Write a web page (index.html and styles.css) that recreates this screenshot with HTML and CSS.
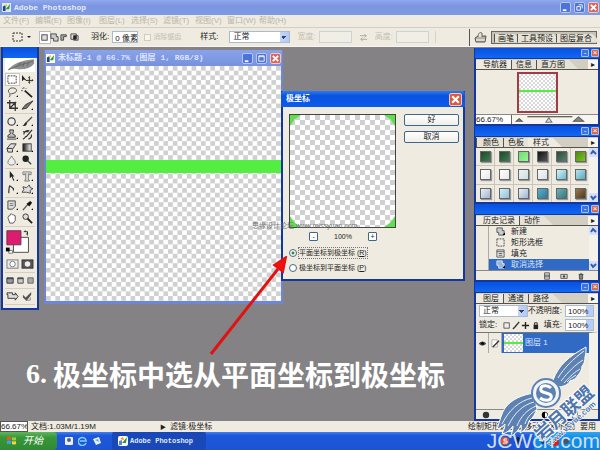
FILE: index.html
```html
<!DOCTYPE html>
<html lang="zh-CN">
<head>
    <meta charset="UTF-8">
    <meta name="viewport" content="width=device-width, initial-scale=1.0">
    <title>Adobe Photoshop</title>
    <link rel="stylesheet" href="styles.css">
</head>
<body>
  <header class="titlebar">
    <svg class="app_icon" viewBox="0 0 10 10"><rect width="10" height="10" fill="#dfe9f5"/><path d="M1 9V4l3-2v7z" fill="#23448a"/><path d="M4 7 9 1l-1 6z" fill="#2c9a3c"/><path d="M2 3l3-2 1 3z" fill="#f0c92c"/></svg>
    <h1>Adobe Photoshop</h1>
    <div class="win_btns">
      <button aria-label="最小化"><svg viewBox="0 0 10 10"><path d="M2 8h4" stroke="#fff" stroke-width="2"/></svg></button>
      <button aria-label="还原"><svg viewBox="0 0 10 10"><path d="M4 2h4v4M2 4h4v4H2z" stroke="#fff" fill="none"/></svg></button>
      <button class="close" aria-label="关闭"><svg viewBox="0 0 10 10"><path d="M2 2l6 6M8 2l-6 6" stroke="#fff" stroke-width="2"/></svg></button>
    </div>
  </header>

  <nav class="menu">
    <button>文件(F)</button><button>编辑(E)</button><button>图像(I)</button><button>图层(L)</button><button>选择(S)</button><button>滤镜(T)</button><button>视图(V)</button><button>窗口(W)</button><button>帮助(H)</button>
  </nav>

  <div class="options">
    <button class="cur_tool" aria-label="矩形选框">
      <svg width="20" height="12" viewBox="0 0 20 12"><rect x="1" y="2" width="9" height="8" fill="none" stroke="#333" stroke-dasharray="2 1"/><path d="M15 5h4l-2 2z" fill="#222"/></svg>
    </button>
    <div class="modes">
      <button class="on" aria-label="新选区"><svg viewBox="0 0 10 10"><rect x="2" y="2" width="6" height="6" fill="#ddd" stroke="#444"/></svg></button>
      <button aria-label="添加"><svg viewBox="0 0 10 10"><path d="M1 1h6v3h2v5H4V6H1z" fill="#ccc" stroke="#444"/></svg></button>
      <button aria-label="减去"><svg viewBox="0 0 10 10"><path d="M1 8V2h6v2H4v4z" fill="#aaa" stroke="#444"/></svg></button>
      <button aria-label="交叉"><svg viewBox="0 0 10 10"><path d="M1 1h6v6H1zM4 3h5v5H4z" fill="#ddd" stroke="#444"/><path d="M4 3h3v4H4z" fill="#222"/></svg></button>
    </div>
    <label class="feather">羽化: <input type="text" value="0 像素"></label>
    <label class="anti off"><input type="checkbox" disabled>消除锯齿</label>
    <label class="style_sel">样式: <select><option>正常</option></select></label>
    <label class="dim off">宽度: <input type="text" disabled></label>
    <svg class="swap" viewBox="0 0 10 10"><path d="M1 3h7M6 1l2 2-2 2M9 7H2M4 5L2 7l2 2" fill="none" stroke="#aaa49a"/></svg>
    <label class="dim off">高度: <input type="text" disabled></label>
    <div class="dock">
      <button aria-label="画笔面板"><svg width="13" height="13" viewBox="0 0 13 13"><path d="M1 7l3-2h8l-1 6H2z" fill="#b5b1a8" stroke="#55524c"/><path d="M4 6c0-4 2-5 4-4v4" fill="#e9e5da" stroke="#666"/><path d="M2 9h9" stroke="#fff"/></svg></button>
      <div class="well tabs"><button>画笔</button><button>工具预设</button><button>图层复合</button></div>
    </div>
  </div>

  <main class="workspace">
    <aside class="toolbox">
      <div class="tb_head"></div>
      <svg class="quill" viewBox="0 0 34 13"><path d="M3 12C11 4 20 1 33 0v5c-4 5-11 7-20 6-3 0-6-1-8 1z" fill="#8f8f8f"/><path d="M4 12C12 8 20 6 32 2M16 8l3-5M20 9l2-6M12 9l5-5M25 8l2-5" stroke="#555" stroke-width=".7" fill="none"/></svg>
      <div class="tools">
        <button class="on" aria-label="选框"><svg viewBox="0 0 14 12"><path d="M2 2h9v8H2z" fill="none" stroke="#333" stroke-dasharray="2 1"/></svg></button>
        <button aria-label="移动"><svg viewBox="0 0 14 12"><path d="M1 1v7l2-2 3 1z" fill="#222"/><path d="M9 3v7M5 7h8M8 4l1-1 1 1M8 9l1 1 1-1M12 6l1 1-1 1" stroke="#222" fill="none"/></svg></button>
        <button aria-label="套索"><svg viewBox="0 0 14 12"><path d="M4 7C1 5 3 1 7 1s6 3 3 5-6 1-6 2 1 2-1 3" fill="none" stroke="#444"/><path d="M11 11h2V9z"/></svg></button>
        <button aria-label="魔棒"><svg viewBox="0 0 14 12"><path d="M4 4l8 7" stroke="#222" stroke-width="2"/><path d="M3 0v2M0 4h2M1 1l1 1M6 1L5 2" stroke="#555"/></svg></button>
        <button aria-label="裁剪"><svg viewBox="0 0 14 12"><path d="M4 0v9h9M1 3h9v9M4 9l7-7" fill="none" stroke="#333" stroke-width="1.4"/></svg></button>
        <button aria-label="切片"><svg viewBox="0 0 14 12"><path d="M1 10l5-1 7-8-8 4z" fill="#777" stroke="#333"/><path d="M11 11h2V9z"/></svg></button>
      </div>
      <div class="tools">
        <button aria-label="修复画笔"><svg viewBox="0 0 14 12"><circle cx="6" cy="6" r="4" fill="#eee" stroke="#444" stroke-width="1.3"/><path d="M11 11h2V9z"/></svg></button>
        <button aria-label="画笔"><svg viewBox="0 0 14 12"><path d="M12 1L5 8" stroke="#555" stroke-width="1.5"/><path d="M6 7c-3 0-2 3-5 4 4 0 6-1 5-4z" fill="#222"/><path d="M11 11h2V9z"/></svg></button>
        <button aria-label="图章"><svg viewBox="0 0 14 12"><path d="M4 1h4v2L7 5l3 2v2H2V7l3-2-1-2zM1 11h10" fill="#bbb" stroke="#333"/><path d="M11 11h2V9z"/></svg></button>
        <button aria-label="历史画笔"><svg viewBox="0 0 14 12"><path d="M12 1L6 8c-2 0-1 2-4 3M2 3h6M3 6c0-3 3-5 6-4M8 11c3-1 4-3 3-5" fill="none" stroke="#333" stroke-width="1.3"/></svg></button>
        <button aria-label="橡皮"><svg viewBox="0 0 14 12"><path d="M1 7l4-5h6L7 8v3H2zM1 7h6" fill="#ddd" stroke="#333"/><path d="M11 11h2V9z"/></svg></button>
        <button aria-label="渐变"><svg viewBox="0 0 14 12"><defs><linearGradient id="gr"><stop stop-color="#111"/><stop offset="1" stop-color="#fff"/></linearGradient></defs><rect x="2" y="2" width="9" height="8" fill="url(#gr)" stroke="#333"/><path d="M11 11h2V9z"/></svg></button>
        <button aria-label="模糊"><svg viewBox="0 0 14 12"><path d="M6 1c1 3 4 4 4 7 0 4-8 4-8 0 0-3 3-4 4-7z" fill="#eee" stroke="#777"/><path d="M11 11h2V9z"/></svg></button>
        <button aria-label="减淡"><svg viewBox="0 0 14 12"><circle cx="5" cy="4" r="3.500" fill="#222"/><path d="M7 6l4 4" stroke="#444" stroke-width="1.5"/></svg></button>
      </div>
      <div class="tools">
        <button aria-label="路径选择"><svg viewBox="0 0 14 12"><path d="M4 0v8l2-2 2 5 1-1-2-4h2z" fill="#222"/><path d="M11 11h2V9z"/></svg></button>
        <button aria-label="文字"><svg viewBox="0 0 14 12"><path d="M2 1h9v3H9V3H8v7h1v1H4v-1h1V3H4v1H2z" fill="#ddd" stroke="#666" stroke-width=".8"/><path d="M11 11h2V9z"/></svg></button>
        <button aria-label="钢笔"><svg viewBox="0 0 14 12"><path d="M3 10C3 6 3 4 4 2l4 3v2" fill="none" stroke="#333" stroke-width="1.3"/><path d="M11 11h2V9z"/></svg></button>
        <button aria-label="形状"><svg viewBox="0 0 14 12"><path d="M1 9l2-3-1-3 4 1 3-3 1 3 3 1-3 2v3l-4-1z" fill="#ddd" stroke="#444"/><path d="M11 11h2V9z"/></svg></button>
      </div>
      <div class="tools">
        <button aria-label="注释"><svg viewBox="0 0 14 12"><path d="M2 1h8v6l-3 3H2z" fill="#ddd" stroke="#444"/><path d="M4 4h4M4 6h4" stroke="#777"/><path d="M11 11h2V9z"/></svg></button>
        <button aria-label="吸管"><svg viewBox="0 0 14 12"><path d="M2 11l6-7" stroke="#555" stroke-width="1.5"/><path d="M6 4l3 3 3-4-2-2z" fill="#111"/><path d="M11 11h2V9z"/></svg></button>
        <button aria-label="抓手"><svg viewBox="0 0 14 12"><path d="M2 5l1-2h1l1-2h1l1 1h1l2 1v5l-2 3H4z" fill="#fff" stroke="#555"/></svg></button>
        <button aria-label="缩放"><svg viewBox="0 0 14 12"><circle cx="5" cy="4" r="3" fill="#ddd" stroke="#333"/><path d="M7 6l5 5" stroke="#222" stroke-width="2"/></svg></button>
      </div>
      <svg class="colors" viewBox="0 0 32 28"><path d="M9 9h16v16H9z" fill="#fff" stroke="#444"/><path d="M2 2h15v15H2z" fill="#dc1c70" stroke="#6a3048"/><path d="M21 3h3v3M20 3l2-1M24 7l-1-2" stroke="#222" fill="none"/><path d="M4 23h4v3H4z" fill="#fff" stroke="#777"/><path d="M1 20h4v4H1z"/></svg>
      <div class="tools wide">
        <button aria-label="标准模式"><svg viewBox="0 0 14 12"><rect x="1" y="1" width="12" height="9" fill="#eee" stroke="#777"/><circle cx="7" cy="5.500" r="3" fill="#fff" stroke="#777"/></svg></button>
        <button aria-label="快速蒙版"><svg viewBox="0 0 14 12"><rect x="1" y="1" width="12" height="9" fill="#555" stroke="#333"/><circle cx="7" cy="5.500" r="3" fill="#eee"/></svg></button>
      </div>
      <div class="tools three">
        <button aria-label="标准屏幕"><svg viewBox="0 0 10 10"><path d="M1 2h7v6H1z" fill="#99a" stroke="#333"/><path d="M1 3h7" stroke="#333"/></svg></button>
        <button aria-label="带菜单全屏"><svg viewBox="0 0 10 10"><path d="M2 2h6v6H2z" fill="#ccc" stroke="#444"/><path d="M2 3h6" stroke="#333"/></svg></button>
        <button aria-label="全屏"><svg viewBox="0 0 10 10"><path d="M2 2h6v6H2z" fill="#aaa" stroke="#666"/></svg></button>
      </div>
      <div class="tools wide">
        <button aria-label="跳转"><svg viewBox="0 0 14 12"><path d="M1 2h6v2h3V2l3 4-3 4V8H2V4H1z" fill="#ddd" stroke="#333"/></svg></button>
        <button aria-label="ImageReady"><svg viewBox="0 0 14 12"><path d="M2 4l3 3 6-6v3l-5 7-4-4z" fill="#555"/><path d="M10 7v3H6" stroke="#888" fill="none"/></svg></button>
      </div>
    </aside>

    <section class="doc">
      <div class="doc_title">
        <svg class="app_icon" viewBox="0 0 10 10"><rect width="10" height="10" fill="#fff"/><path d="M1 9V4l3-2v7z" fill="#23448a"/><path d="M4 7 9 1l-1 6z" fill="#2c9a3c"/><path d="M2 3l3-2 1 3z" fill="#f0c92c"/></svg>
        <h2>未标题-1 @ 66.7% (图层 1, RGB/8)</h2>
        <div class="win_btns">
          <button aria-label="最小化"><svg viewBox="0 0 10 10"><path d="M2 8h4" stroke="#fff" stroke-width="2"/></svg></button>
          <button aria-label="最大化"><svg viewBox="0 0 10 10"><path d="M2 2h6v6H2zM2 3h6" stroke="#fff" fill="none"/></svg></button>
          <button class="close" aria-label="关闭"><svg viewBox="0 0 10 10"><path d="M2 2l6 6M8 2l-6 6" stroke="#fff" stroke-width="2"/></svg></button>
        </div>
      </div>
      <div class="canvas checks"><div class="band"></div></div>
    </section>

    <section class="dialog" role="dialog" aria-label="极坐标">
      <div class="dlg_title">
        <h2>极坐标</h2>
        <button class="close" aria-label="关闭"><svg viewBox="0 0 10 10"><path d="M2 2l6 6M8 2l-6 6" stroke="#fff" stroke-width="2"/></svg></button>
      </div>
      <div class="dlg_body">
        <div class="preview checks">
          <i class="corner"></i><i class="corner"></i><i class="corner"></i><i class="corner"></i>
        </div>
        <div class="dlg_btns"><button>好</button><button>取消</button></div>
        <div class="zoom_row"><button aria-label="缩小">-</button><span>100%</span><button aria-label="放大">+</button></div>
        <div class="radios">
          <label><input type="radio" name="polar" checked><span class="focus">平面坐标到极坐标 (<u>R</u>)</span></label>
          <label><input type="radio" name="polar"><span>极坐标到平面坐标 (<u>P</u>)</span></label>
        </div>
      </div>
    </section>

    <aside class="palettes">
      <section class="palette">
        <div class="p_title"><button aria-label="最小化">-</button><button class="close" aria-label="关闭">×</button></div>
        <div class="tabs"><button class="on">导航器</button><button>信息</button><button>直方图</button><span class="more">▸</span></div>
        <div class="nav_body"><div class="thumb checks_s"><div class="band"></div></div></div>
        <div class="nav_foot">
          <input type="text" value="66.67%" aria-label="缩放比例">
          <svg viewBox="0 0 84 10" preserveAspectRatio="none"><path d="M4 7l3-3 3 3zM60 7l5-5 5 5z" fill="#888" stroke="#555"/><path d="M15 2h44" stroke="#333"/><path d="M33 8l3-5 3 5z" fill="#ddd" stroke="#777"/></svg>
        </div>
      </section>

      <section class="palette">
        <div class="p_title"><button aria-label="最小化">-</button><button class="close" aria-label="关闭">×</button></div>
        <div class="tabs"><button>颜色</button><button>色板</button><button class="on">样式</button><span class="more">▸</span></div>
        <div class="scroll_row">
          <div class="swatches">
            <button class="s1" aria-label="样式 1"></button><button class="s1" aria-label="样式 2"></button><button class="s2" aria-label="样式 3"></button><button class="s3" aria-label="样式 4"></button><button class="s4" aria-label="样式 5"></button><button class="s5" aria-label="样式 6"></button>
            <button class="s6" aria-label="样式 7"></button><button class="s6" aria-label="样式 8"></button><button class="s7" aria-label="样式 9"></button><button class="s8" aria-label="样式 10"></button><button class="s9" aria-label="样式 11"></button><button class="s10" aria-label="样式 12"></button>
            <button class="s11" aria-label="样式 13"></button><button class="s12" aria-label="样式 14"></button><button class="s11" aria-label="样式 15"></button><button class="s13" aria-label="样式 16"></button><button class="s14" aria-label="样式 17"></button><button class="s15" aria-label="样式 18"></button>
          </div>
          <div class="sbar"><svg viewBox="0 0 9 9"><path d="M2 6l2-3 3 3" fill="none" stroke="#3b5da8" stroke-width="2"/></svg><svg viewBox="0 0 9 9"><path d="M2 3l2 3 3-3" fill="none" stroke="#3b5da8" stroke-width="2"/></svg></div>
        </div>
      </section>

      <section class="palette">
        <div class="p_title"><button aria-label="最小化">-</button><button class="close" aria-label="关闭">×</button></div>
        <div class="tabs"><button class="on">历史记录</button><button>动作</button><span class="more">▸</span></div>
        <div class="scroll_row">
          <ul class="history">
            <li><svg viewBox="0 0 10 10"><path d="M1 1h6v3h2v5H3V6H1z" fill="#ccc" stroke="#555"/><path d="M7 9h3V6z"/></svg>新建</li>
            <li><svg viewBox="0 0 10 10"><path d="M1 1h8v8H1z" fill="none" stroke="#444" stroke-dasharray="2 1"/></svg>矩形选框</li>
            <li><svg viewBox="0 0 10 10"><path d="M1 1h8v8H1zM1 3h8M3 5h4M3 7h4" fill="#eee" stroke="#555"/></svg>填充</li>
            <li class="on"><svg viewBox="0 0 10 10"><path d="M1 1h6v3h2v5H3V6H1z" fill="#9ab4de" stroke="#dfe8f6"/><path d="M7 9h3V6z"/></svg>取消选择</li>
          </ul>
          <div class="sbar"><svg viewBox="0 0 9 9"><path d="M2 6l2-3 3 3" fill="none" stroke="#3b5da8" stroke-width="2"/></svg><svg viewBox="0 0 9 9"><path d="M2 3l2 3 3-3" fill="none" stroke="#3b5da8" stroke-width="2"/></svg></div>
        </div>
        <div class="p_foot">
          <svg viewBox="0 0 10 10"><path d="M2 1h6v8H2zM2 4h6M2 6h6" fill="#ddd" stroke="#444"/></svg>
          <svg viewBox="0 0 10 10"><path d="M1 3h8v5H1z" fill="#ddd" stroke="#444"/><circle cx="5" cy="5.500" r="1.500" fill="#444"/></svg>
          <svg viewBox="0 0 10 10"><path d="M2 3h6M3 3v6h4V3M5 1v8" fill="#bbb" stroke="#333"/></svg>
        </div>
      </section>

      <section class="palette layers">
        <div class="p_title"><button aria-label="最小化">-</button><button class="close" aria-label="关闭">×</button></div>
        <div class="tabs"><button class="on">图层</button><button>通道</button><button>路径</button><span class="more">▸</span></div>
        <div class="l_row">
          <select aria-label="混合模式"><option>正常</option></select>
          <label>不透明度: <input type="text" value="100%"></label>
        </div>
        <div class="l_row">
          <span>锁定:</span>
          <svg class="locks" viewBox="0 0 40 10"><path d="M1 2h6v6H1z" fill="#eee" stroke="#555"/><path d="M18 1l-5 6-2 2" stroke="#333" stroke-width="1.5"/><path d="M25 1v8M21 5h8" stroke="#222" stroke-width="1.500"/><path d="M34 4h5v5h-5z" fill="#222"/><path d="M35 4V2h3v2" fill="none" stroke="#222"/></svg>
          <label>填充: <input type="text" value="100%"></label>
        </div>
        <div class="layer">
          <span class="cell"><svg viewBox="0 0 10 10"><path d="M1 5c2-3 6-3 8 0-2 3-6 3-8 0z" fill="#444"/><circle cx="5" cy="5" r="1.500"/></svg></span>
          <span class="cell"><svg viewBox="0 0 10 10"><path d="M1 1h6v8H1z" fill="#fff" stroke="#aaa"/><path d="M9 2L4 7 2 9" stroke="#333" stroke-width="1.500"/></svg></span>
          <span class="l_thumb checks_s"><i class="band"></i></span>
          <span class="l_name">图层 1</span>
        </div>
        <div class="l_space"></div>
        <div class="p_foot l_foot">
          <svg viewBox="0 0 10 10"><circle cx="5" cy="5" r="4" fill="#333"/></svg>
          <svg viewBox="0 0 10 10"><path d="M1 2h8v6H1z" fill="#ddd" stroke="#555"/></svg>
          <svg viewBox="0 0 10 10"><circle cx="5" cy="5" r="3.500" fill="#fff" stroke="#222"/><path d="M5 1a4 4 0 0 0 0 8z"/></svg>
          <svg viewBox="0 0 10 10"><path d="M2 1h6v8H2z" fill="#eee" stroke="#555"/></svg>
        </div>
      </section>
    </aside>

    <p class="site_mark">思缘设计论坛 www.missyuan.com</p>
    <svg class="arrow" viewBox="0 0 80 100"><path d="M2 98L69 13" stroke="#e01212" stroke-width="3"/><path d="M77 1L65 9l9 7z" fill="#f01010" stroke="#e01212" stroke-width="2"/></svg>
    <p class="caption"><b>6.</b>极坐标中选从平面坐标到极坐标</p>
  </main>

  <div class="status">
    <input type="text" value="66.67%" aria-label="显示比例">
    <span class="size">文档:1.03M/1.19M</span>
    <span class="tri">▶</span>
    <span>滤镜:极坐标</span>
    <span class="hint">绘制矩形选区或移动选区外框。要用</span>
  </div>

  <footer class="taskbar">
    <button class="start"><svg viewBox="0 0 12 12"><path d="M1 2q2-1 4 0v3q-2-1-4 0z" fill="#f0552a"/><path d="M6 2q2 1 4 0v3q-2 1-4 0z" fill="#8fd33c"/><path d="M1 6q2-1 4 0v3q-2-1-4 0z" fill="#4aa0f0"/><path d="M6 6q2 1 4 0v3q-2 1-4 0z" fill="#fbd23c"/></svg>开始</button>
    <div class="quick">
      <svg viewBox="0 0 10 10"><rect x="1" y="1" width="8" height="8" rx="1" fill="#eef"/><circle cx="5" cy="4" r="2" fill="#4a5f9a"/></svg>
      <svg viewBox="0 0 10 10"><path d="M8 7a4 4 0 1 1 0-3M2 5h7" fill="none" stroke="#7fd0ff" stroke-width="1.500"/></svg>
      <svg viewBox="0 0 10 10"><path d="M1 3l6-2 2 6-5 2z" fill="#e6f3ff"/><path d="M3 4l3-1 1 3z" fill="#5aa6d8"/></svg>
    </div>
    <button class="task"><svg viewBox="0 0 10 10"><rect width="10" height="10" rx="2" fill="#fff"/><path d="M4 7 9 1l-1 6z" fill="#2c9a3c"/><path d="M2 3l3-2 1 3z" fill="#f08a2c"/><path d="M1 9V5l3-1v5z" fill="#5a84c8"/></svg>Adobe Photoshop</button>
    <div class="lang">
      <svg viewBox="0 0 10 10"><circle cx="5" cy="5" r="4" fill="#e2572b"/><path d="M7 3H4v2h3v2H3" stroke="#fff" fill="none"/></svg>
      <svg viewBox="0 0 10 10"><path d="M5 1c2 0 2 2 2 3l2 3H7l-1 2H4L3 7H1l2-3c0-1 0-3 2-3z" fill="#16244c"/></svg>
    </div>
    <div class="tray">
      <svg viewBox="0 0 10 10"><circle cx="5" cy="5" r="3" fill="#234"/></svg>
      <svg viewBox="0 0 10 10"><circle cx="5" cy="6" r="4" fill="#d8201c"/></svg>
      <svg viewBox="0 0 10 10"><circle cx="5" cy="5" r="3" fill="#456"/></svg>
    </div>
  </footer>

  <div class="site_logo">
    <svg viewBox="0 0 112 116">
      <g fill="#5d82b2" stroke="#fff" stroke-width="1">
        <path d="M65 46C71 31 80 23 98 13c0 5 0 7-1 10 0 4-1 7-3 9 0 4-2 7-4 9-2 4-5 5-8 6-2 4-6 5-10 6z"/>
        <path d="M46 59C34 61 24 65 17 74 13 80 12 87 9 95c3-1 5-2 8-5 0 4-2 7-3 10 5-1 8-4 11-8 0 4-1 7-3 11 5-3 9-7 11-12 1 3 0 6-1 8 5-3 8-7 9-12 4-3 6-7 8-12z"/>
      </g>
      <path d="M70 44C76 34 85 25 96 17M73 47c7-9 14-16 22-21M76 49c6-7 11-11 16-14M79 48c4-4 6-5 9-7M44 64C31 67 21 76 14 90M46 68C35 71 27 78 20 92M48 72c-9 4-15 10-19 20M48 76c-6 4-9 8-11 14" fill="none" stroke="#e7edf5"/>
      <circle cx="58" cy="59" r="14" fill="#f2f5fa" stroke="#5d82b2" stroke-width="2"/>
      <circle cx="58" cy="59" r="10" fill="#5d82b2"/>
      <path d="M63 54c-3-3-9-3-10 0s1 4 5 5 6 2 5 5-7 3-11 0" fill="none" stroke="#fff" stroke-width="3"/>
    </svg>
    <span class="l_big">岩月联盟</span>
    <span class="l_small">www.vsyue.com</span>
    <span class="jcw">JCWcn.com</span>
  </div>
</body>
</html>
```
FILE: styles.css
```css
*{margin:0;padding:0;box-sizing:border-box;}
:root{--face:#efebe0;--line:#aca899;--blue:#0b58e6;--navy:#1238a0;}
body{
  position:relative;display:flex;flex-direction:column;width:100%;height:100vh;overflow:hidden;
  font-family:"Liberation Sans","Noto Sans CJK SC",sans-serif;font-size:8px;line-height:10px;color:#222;background:#848284;
}
button,input,select{font:inherit;color:inherit;border:0;background:none;border-radius:0;min-width:0;}
h1,h2{font-size:8px;line-height:10px;}
svg{display:block;}
ul{list-style:none;}
label{white-space:nowrap;}

/* 标题栏 */
.titlebar{display:flex;align-items:center;gap:3px;height:15px;padding:0 1px 0 2px;background:linear-gradient(#8fa8ee,#7b96e0 40%,#7d9be6);flex:none;}
.titlebar h1{font-family:"Liberation Mono",monospace;color:#e3eafb;}
.app_icon{width:9px;height:9px;flex:none;}
.win_btns{display:flex;gap:3px;margin-left:auto;}
.win_btns button,.close{width:11px;height:11px;border:1px solid #b6c6f4;border-radius:2px;background:#4c72dc;}
.win_btns .close,.close{background:#cf6a62;border-color:#f0c8c8;}
.win_btns svg,.close svg{width:100%;height:100%;}

.menu{display:flex;height:12px;padding-left:3px;background:var(--face);color:#bab6a8;flex:none;}
.menu button{width:32px;text-align:left;white-space:nowrap;}

/* 选项栏 */
.options{display:flex;align-items:center;height:20px;padding-left:12px;background:var(--face);border-top:1px solid #d4cfc2;border-bottom:1px solid #f8f6ee;flex:none;}
.modes{display:flex;width:40px;margin-left:8px;}
.modes button{width:10px;height:11px;}
.modes .on{background:#fff;outline:1px solid #bbb;}
.modes svg{width:9px;height:9px;}
.options label{display:flex;align-items:center;}
.options input[type=text]{height:12px;border:1px solid #a8bccf;background:#fff;}
.feather{gap:3px;padding-left:11px;}
.feather input{width:26px;padding-left:2px;}
.options .anti{gap:2px;margin-left:6px;width:56px;font-size:7px;}
.anti input{appearance:none;width:7px;height:7px;border:1px solid #d0ccc0;background:#f7f5ee;}
.off{color:#c4c0b4;}
.style_sel{gap:11px;}
select{appearance:none;height:12px;padding-left:3px;border:1px solid #a8bccf;
  background:linear-gradient(45deg,transparent 50%,#345 50%) right 5px top 4px/3px 3px no-repeat,linear-gradient(-45deg,transparent 50%,#345 50%) right 2px top 4px/3px 3px no-repeat,linear-gradient(90deg,#c4d6fb,#b4c8f6) right/9px 100% no-repeat,#fff;}
.style_sel select{width:61px;}
.dim{gap:3px;margin-left:7px;}
.options .dim input{width:33px;background:#f1eee5;border-color:#ccd3d6;}
.swap{width:9px;height:9px;margin-left:7px;}
.swap + .dim{padding-right:6px;border-right:1px solid #d6d2c6;}
.dock{display:flex;align-items:center;gap:4px;margin-left:auto;padding:2px 3px 2px 4px;border-left:1px solid #555;}
.tabs{display:flex;height:10px;background:#d2cec2;border-bottom:1px solid #55524c;}
.tabs button{display:block;height:9px;padding:0 13px 0 5px;margin-right:-9px;line-height:9px;white-space:nowrap;background:linear-gradient(#55524c,#55524c) left/1px 100% no-repeat,#e6e2d6;clip-path:polygon(0 0,calc(100% - 9px) 0,100% 100%,0 100%);}
.tabs button:first-child{padding-left:7px;}
.tabs .on{background:var(--face);}
.dock .well{width:106px;height:13px;padding:2px 0 0 2px;border:1px solid #6b6860;background:#c6c2b7;}
.dock .well button{padding:0 9px 0 4px;margin-right:-6px;}

/* 工作区 */
.workspace{position:relative;flex:1;min-height:0;display:flex;align-items:flex-start;background:#848284;}
.toolbox{width:38px;margin-left:1px;padding:2px 2px 3px;border:solid var(--navy);border-width:0 2px 2px;background:var(--face);flex:none;}
.tb_head{height:11px;margin:-2px -2px 0;background:linear-gradient(#0a4fe0,#1068f2);}
.quill{width:100%;height:14px;background:#fff;}
.tools{display:grid;grid-template-columns:1fr 1fr;padding:1px 0;border-bottom:1px solid #d4cfc0;}
.tools button{height:13px;display:flex;align-items:center;justify-content:center;}
.tools svg{width:13px;height:11px;}
.tools .on{background:#fff;outline:1px solid #c9c5b9;outline-offset:-1px;}
.colors{width:100%;height:30px;padding:1px 0;}
.tools.wide,.tools.three{padding:1px 0;border-bottom:1px solid #d4cfc0;}
.tools.three{grid-template-columns:1fr 1fr 1fr;}
.tools.three svg{width:9px;height:9px;}

.doc{position:absolute;left:44px;top:3px;width:239px;padding:0 2px 3px;background:#6e87d2;}
.doc_title{display:flex;align-items:center;gap:3px;height:16px;padding:0 1px;background:linear-gradient(#8aa2ea,#7791de);margin:0 -1px;}
.doc_title h2{font-family:"Liberation Mono","Noto Sans CJK SC",monospace;color:#dde5fa;white-space:nowrap;}
.checks{background:repeating-conic-gradient(#d0d0d0 0 25%,#fff 0 50%) 0 0/4% 4%;}
.checks_s{background:repeating-conic-gradient(#d8d8d8 0 25%,#fff 0 50%) 0 0/4px 4px;}
.canvas{aspect-ratio:1;padding-top:94px;}
.band{display:block;height:13px;background:#54ee42;}

/* 极坐标对话框 */
.dialog{position:absolute;left:281px;top:44px;width:184px;border:2px solid var(--navy);border-top-width:0;background:var(--face);}
.dlg_title{display:flex;align-items:center;justify-content:space-between;height:16px;margin:0 -2px;padding:0 3px 0 5px;border-radius:3px 3px 0 0;background:linear-gradient(#2b7bf5,#0a52de 30%,#0b5cec);color:#fff;}
.dlg_title .close{background:#dc5a3c;width:13px;height:13px;}
.dlg_body{display:grid;grid-template-columns:107px 55px;column-gap:8px;padding:7px 4px 4px 6px;}
.preview{position:relative;height:114px;border:1px solid #444;background-size:10px 10px;}
.corner{position:absolute;width:11px;height:11px;background:#5ee04e;}
.corner:nth-child(1){left:0;top:0;clip-path:polygon(0 0,100% 0,40% 40%,0 100%);}
.corner:nth-child(2){right:0;top:0;clip-path:polygon(0 0,100% 0,100% 100%,60% 40%);}
.corner:nth-child(3){left:0;bottom:0;clip-path:polygon(0 0,40% 60%,100% 100%,0 100%);}
.corner:nth-child(4){right:0;bottom:0;clip-path:polygon(100% 0,100% 100%,0 100%,60% 60%);}
.dlg_btns{display:flex;flex-direction:column;gap:5px;}
.dlg_btns button{height:12px;border:1px solid #3d6793;border-radius:2px;background:linear-gradient(#fff,#f0eee8);line-height:10px;}
.zoom_row{display:flex;justify-content:center;align-items:center;gap:16px;padding-left:1px;height:17px;font-size:7px;}
.zoom_row button{width:9px;height:9px;border:1px solid #3d6793;border-radius:1px;background:#fff;line-height:6px;}
.radios{grid-column:1/3;font-size:7px;}
.radios label{display:flex;align-items:center;gap:2px;height:15px;}
.radios input{appearance:none;width:8px;height:8px;border:1px solid #46688c;border-radius:50%;background:#fff;}
.radios input:checked{background:radial-gradient(#2a9a2a 0 1px,#fff 2px);}
.focus{outline:1px dotted #777;}

/* 右侧面板 */
.palettes{display:flex;flex-direction:column;align-self:stretch;width:126px;margin-left:auto;padding-top:1px;}
.palette{display:flex;flex-direction:column;height:78px;padding:0 2px 2px;background:var(--navy);flex:none;}
.p_title{display:flex;justify-content:flex-end;align-items:center;gap:2px;height:10px;margin:0 -1px 1px;background:linear-gradient(#0a4fe0,#1068f2);flex:none;}
.p_title button{width:8px;height:8px;border:1px solid #a8c0f4;border-radius:1px;background:#3c74e2;color:#fff;line-height:6px;}
.p_title .close{background:#d86a4c;}
.palette .tabs{height:11px;padding-top:1px;flex:none;}
.more{margin-left:auto;width:10px;text-align:center;line-height:9px;background:#f8f6ef;}
.nav_body{display:flex;justify-content:center;align-items:center;flex:1;background:var(--face);}
.thumb{width:41px;height:41px;border:2px solid #a03c42;padding-top:16px;}
.thumb .band{height:2px;}
.nav_foot{display:flex;height:10px;background:#f7f5ee;border-top:1px solid #888;}
.nav_foot input{width:36px;background:#fff;border-right:1px solid #666;}
.nav_foot svg{flex:1;width:50px;height:9px;}
.scroll_row{display:flex;flex:1;min-height:0;background:var(--face);}
.swatches{flex:1;display:grid;grid-template-columns:repeat(6,1fr);grid-template-rows:repeat(3,1fr);gap:1px;background:#c9c5ba;}
.swatches button{background:var(--face);display:flex;align-items:center;justify-content:center;}
.swatches button::before{content:"";width:9px;height:9px;border:1px solid #666;box-shadow:1px 1px 1px #999;background:linear-gradient(135deg,var(--a),var(--b));}
.s1{--a:#1c4a2a;--b:#3f7a50;}
.s2{--a:#6ade6c;--b:#9cf59a;}
.s3{--a:#111;--b:#555;}
.s4{--a:#2a4a3c;--b:#5b806c;}
.s5{--a:#4b8a10;--b:#7cc322;}
.s6{--a:#fff;--b:#e8e8e8;}
.s7{--a:#edf3f4;--b:#cfdde0;}
.s8{--a:#fafafa;--b:#dadfe6;}
.s9{--a:#d6f3fa;--b:#6cb8c9;}
.s10{--a:#b7e4ee;--b:#5aa9bd;}
.s11{--a:#eaf0f8;--b:#9fb4cf;}
.s12{--a:#d8ecf6;--b:#8fc0d8;}
.s13{--a:#5bb0c8;--b:#267c98;}
.s14{--a:#73b0b4;--b:#2d7a82;}
.s15{--a:#9a7a50;--b:#4d3820;}
.sbar{display:flex;flex-direction:column;justify-content:space-between;width:9px;background:#f4f2ea;}
.sbar svg{width:9px;height:9px;background:#d3dffb;border-radius:1px;}
.history{flex:1;overflow:hidden;}
.history li{display:flex;align-items:center;gap:6px;height:11px;padding-left:7px;margin-left:12px;border-left:1px solid #aaa;}
.history svg{width:9px;height:9px;}
.history .on{background:#316ac5;color:#d8e4f8;}
.p_foot{display:flex;justify-content:flex-end;align-items:center;gap:9px;height:10px;padding-right:13px;background:var(--face);border-top:1px solid #888;flex:none;}
.p_foot svg{width:8px;height:8px;}
.layers{flex:1;height:auto;}
.l_row{display:flex;align-items:center;justify-content:space-between;height:14px;padding:0 4px 0 3px;background:var(--face);flex:none;}
.l_row select{width:50px;}
.l_row label{display:flex;align-items:center;gap:3px;}
.l_row input{width:29px;height:12px;padding-left:2px;border:1px solid #a8bccf;background:linear-gradient(#b8ccf8,#b8ccf8) right/7px 100% no-repeat,#fff;}
.locks{width:40px;height:9px;}
.layer{display:flex;height:21px;border-top:1px solid #777;border-right:9px solid #f4f2ea;background:#316ac5;flex:none;}
.cell{display:flex;align-items:center;justify-content:center;width:13px;background:var(--face);border-right:1px solid #aaa;}
.cell svg{width:9px;height:9px;}
.l_thumb{width:19px;margin:1px 2px;padding-top:8px;}
.l_thumb .band{height:2px;}
.l_name{align-self:center;color:#d8e8ff;}
.l_space{flex:1;border-right:9px solid #f4f2ea;background:var(--face);}
.l_foot{justify-content:space-around;}

/* 覆盖文字 */
.site_mark{position:absolute;left:252px;top:174px;font-size:7px;color:#777;white-space:nowrap;}
.arrow{position:absolute;left:209px;top:209px;width:80px;height:100px;}
.caption{position:absolute;left:26px;top:311px;font:bold 28px/32px "Noto Sans CJK SC",sans-serif;color:#fff;white-space:nowrap;display:flex;gap:6px;}
.caption b{font-family:"Liberation Serif",serif;}

.status{display:flex;align-items:center;height:11px;background:var(--face);white-space:nowrap;flex:none;}
.status input{width:28px;height:11px;border:1px solid #555;background:#fff;}
.size{width:132px;padding-left:3px;}
.tri{width:10px;font-size:6px;}
.hint{margin-left:auto;padding-right:4px;}

/* 任务栏 */
.taskbar{display:flex;height:18px;background:linear-gradient(#3c80f0,#1f57da 20%,#1c54d4);flex:none;}
.start{display:flex;align-items:center;gap:5px;width:57px;padding-left:6px;border-radius:0 4px 4px 0;background:linear-gradient(#5cb85a,#3a963a 30%,#2f8a32);color:#fff;font-style:italic;font-size:10px;}
.start svg{width:12px;height:12px;}
.quick{display:flex;align-items:center;gap:4px;width:55px;padding-left:7px;}
.quick svg,.task svg,.tray svg,.lang svg{width:10px;height:10px;}
.task{display:flex;align-items:center;gap:2px;width:94px;padding-left:6px;border-radius:2px;background:#1a48b8;color:#dfe8fb;font:bold 7px "Liberation Mono",monospace;white-space:nowrap;}
.lang{display:flex;align-items:center;gap:3px;margin-left:auto;width:34px;}
.tray{display:flex;align-items:center;gap:1px;width:66px;padding-left:5px;background:linear-gradient(#30a6f4,#1290e8 30%,#1188e0);}

/* 右下角标志 */
.site_logo{position:absolute;right:0;bottom:0;width:112px;height:116px;pointer-events:none;}
.site_logo svg{width:112px;height:116px;}
.l_big,.l_small,.jcw{position:absolute;white-space:nowrap;}
.l_big{left:39px;top:68px;font:bold 18px/20px "Noto Sans CJK SC",sans-serif;color:#4f76ac;-webkit-text-stroke:2px #fff;paint-order:stroke fill;transform:rotate(-42deg);}
.l_small{left:53px;top:85px;font:bold 8px/10px "Liberation Sans",sans-serif;color:#4f76ac;-webkit-text-stroke:1px #fff;paint-order:stroke fill;transform:rotate(-42deg);}
.jcw{right:0;bottom:-1px;font:21px/20px "Liberation Sans",sans-serif;color:#cfe0fa;}
```
